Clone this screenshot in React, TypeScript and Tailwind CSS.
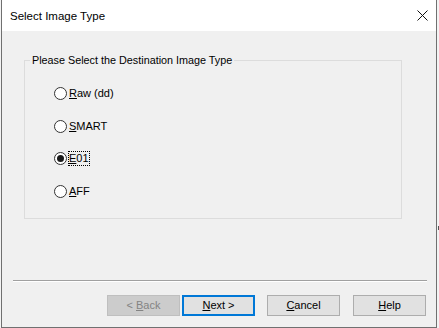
import React from "react";

function Radio({ label, mn, checked, focused, mt }: { label: string; mn: number; checked?: boolean; focused?: boolean; mt: string }) {
  const before = label.slice(0, mn);
  const ch = label.slice(mn, mn + 1);
  const after = label.slice(mn + 1);
  return (
    <div className={`flex items-center h-[13px] ${mt}`}>
      <div className="w-[13px] h-[13px] rounded-full border border-[#333333] bg-white flex items-center justify-center shrink-0">
        {checked && <div className="w-[7px] h-[7px] rounded-full bg-[#1a1a1a]" />}
      </div>
      <span
        className={`ml-[2px] text-[11px] leading-[13px] text-black whitespace-nowrap ${focused ? "outline-1 outline-dotted outline-black" : ""}`}
      >
        {before}
        <span className="underline underline-offset-[1px]">{ch}</span>
        {after}
      </span>
    </div>
  );
}

function Btn({ label, mn, kind }: { label: string; mn: number; kind: "disabled" | "default" | "normal" }) {
  const before = label.slice(0, mn);
  const ch = label.slice(mn, mn + 1);
  const after = label.slice(mn + 1);
  const cls =
    kind === "disabled"
      ? "bg-[#cccccc] border border-[#bfbfbf] text-[#838383]"
      : kind === "default"
      ? "bg-[#e1e1e1] border-2 border-[#0078d7] text-black"
      : "bg-[#e1e1e1] border border-[#adadad] text-black";
  return (
    <div className={`w-[73px] h-[21px] flex items-center justify-center text-[11px] leading-[13px] ${cls}`}>
      <span className="whitespace-pre">
        {before}
        <span className="underline underline-offset-[1px]">{ch}</span>
        {after}
      </span>
    </div>
  );
}

export default function App() {
  return (
    <div className="relative w-[439px] h-[328px] bg-[#f3f3f3] flex font-['Liberation_Sans',Arial,sans-serif]">
      <div className="ml-[1px] w-[436px] h-[328px] border-x border-b border-[#707070] flex flex-col">
        <div className="h-[31px] bg-white flex items-center justify-between pl-[8px] pr-[8px] shrink-0">
          <span className="text-[11.5px] text-black leading-[14px]">Select Image Type</span>
          <svg width="11" height="11" viewBox="0 0 11 11" className="block">
            <path d="M0.5 0.5 L10.5 10.5 M10.5 0.5 L0.5 10.5" stroke="#111" strokeWidth="1" fill="none" />
          </svg>
        </div>
        <div className="flex-1 bg-[#f0f0f0] flex flex-col">
          <fieldset className="mt-[23px] ml-[22px] w-[378px] h-[165px] border border-[#dcdcdc] p-0">
            <legend className="ml-[5px] px-[2px] text-[10.8px] leading-[13px] text-black">
              Please Select the Destination Image Type
            </legend>
            <div className="flex flex-col pl-[29px]">
              <Radio label="Raw (dd)" mn={0} mt="mt-[20px]" />
              <Radio label="SMART" mn={0} mt="mt-[20px]" />
              <Radio label="E01" mn={0} checked focused mt="mt-[19px]" />
              <Radio label="AFF" mn={0} mt="mt-[20px]" />
            </div>
          </fieldset>
          <div className="mt-[61px] ml-[11px] w-[414px] h-[2px] border-t border-b border-t-[#a0a0a0] border-b-white" />
          <div className="mt-[13px] flex justify-end pr-[10px]">
            <Btn label="< Back" mn={2} kind="disabled" />
            <div className="ml-[2px]">
              <Btn label="Next >" mn={0} kind="default" />
            </div>
            <div className="ml-[12px]">
              <Btn label="Cancel" mn={0} kind="normal" />
            </div>
            <div className="ml-[13px]">
              <Btn label="Help" mn={0} kind="normal" />
            </div>
          </div>
        </div>
      </div>
      <div className="absolute right-0 top-[226px] w-[1px] h-[4px] bg-[#555555]" />
    </div>
  );
}
